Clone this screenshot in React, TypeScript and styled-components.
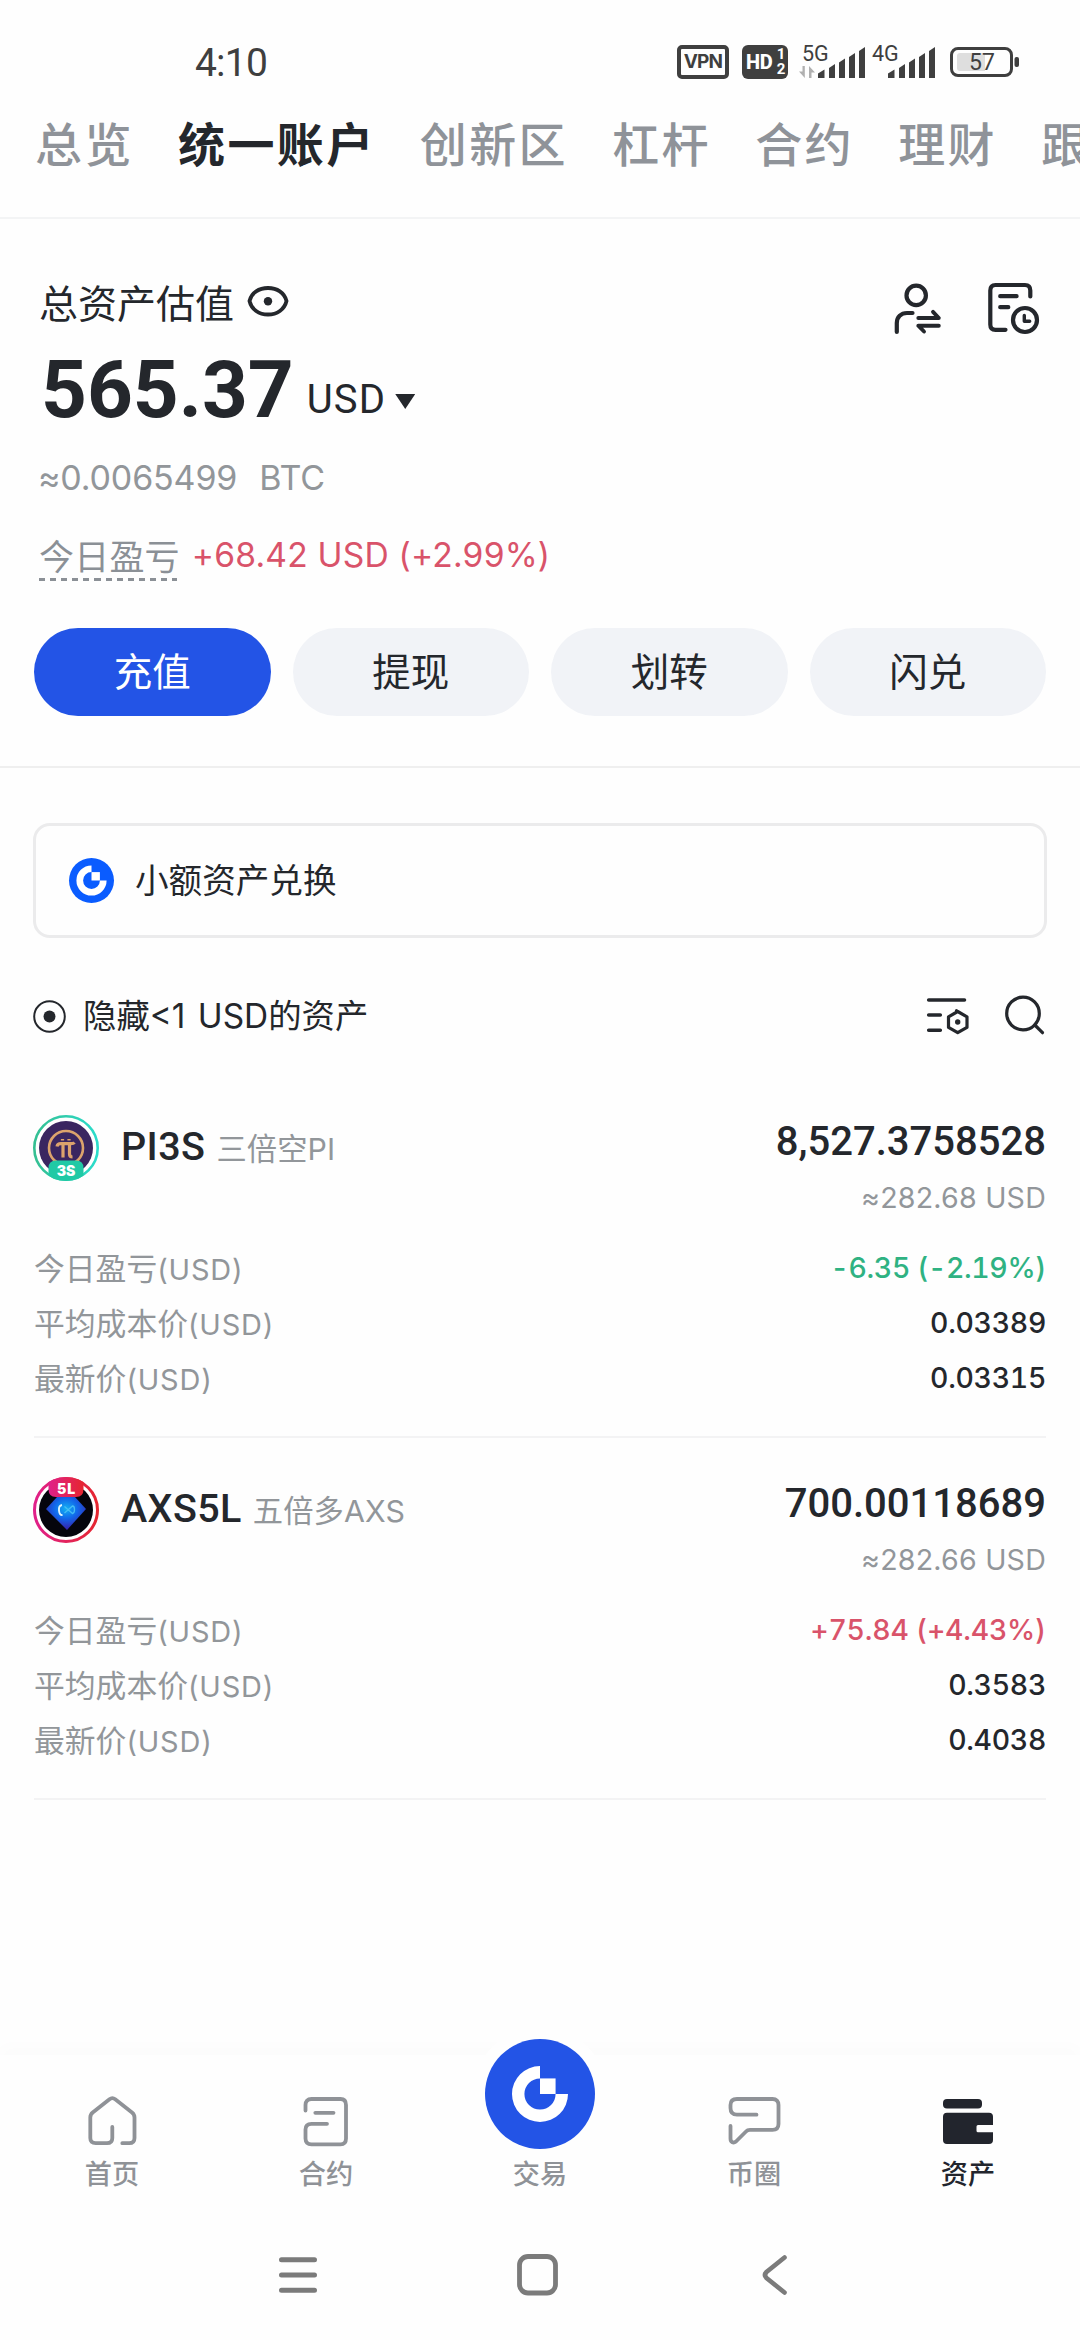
import React from "react";
import styled, { createGlobalStyle } from "styled-components";

const ink = "#24272c";
const muted = "#92969a";
const blue = "#2354e6";
const red = "#d9536a";
const green = "#2fb282";

const sans = `Inter, "Noto Sans CJK SC", sans-serif`;
const narrow = `Roboto, "Noto Sans CJK SC", sans-serif`;

const GlobalStyle = createGlobalStyle`
  *, *::before, *::after { box-sizing: border-box; }
  body { margin: 0; background: #fefefe; }
  svg { display: block; flex: none; overflow: visible; }
`;

const Page = styled.div`
  width: 1080px;
  height: 2340px;
  display: flex;
  flex-direction: column;
  overflow: hidden;
  background: #fefefe;
  color: ${ink};
  font-family: ${sans};
  white-space: nowrap;
`;

/* ---------- status bar ---------- */

const StatusBar = styled.header`
  height: 116px;
  padding: 8px 60px 0 195px;
  display: flex;
  align-items: center;
  justify-content: space-between;
  color: #3f3f3f;
`;

const Clock = styled.span`
  padding-top: 1px;
  font: 400 39px/50px ${narrow};
  letter-spacing: -0.8px;
`;

const StatusIcons = styled.div`
  display: flex;
  align-items: center;
`;

const VpnBadge = styled.span`
  width: 52px;
  height: 34px;
  margin-right: 13px;
  border: 4px solid #3f3f3f;
  border-radius: 5px;
  font: 700 19px/26px ${sans};
  letter-spacing: -0.8px;
  text-align: center;
`;

const HdBadge = styled.span`
  width: 46px;
  height: 34px;
  margin-right: 11px;
  padding: 0 3px 0 4px;
  display: flex;
  align-items: center;
  justify-content: space-between;
  border-radius: 6px;
  background: #3f3f3f;
  color: #fff;
  font: 800 20px/34px ${narrow};
  letter-spacing: -0.4px;
`;

const HdSims = styled.span`
  display: grid;
  font: 700 15px/15px ${narrow};
  justify-items: center;
`;

/* ---------- account tabs ---------- */

const Tabs = styled.nav`
  height: 103px;
  padding-left: 35px;
  display: flex;
  gap: 44.2px;
  border-bottom: 2px solid #f3f4f5;
`;

const Tab = styled.span<{ $active?: boolean }>`
  font: ${(p) => (p.$active ? 700 : 500)} 47px/57px ${sans};
  letter-spacing: 2.4px;
  color: ${(p) => (p.$active ? ink : "#8f9399")};
`;

/* ---------- balance summary ---------- */

const Summary = styled.section`
  height: 549px;
  padding: 59px 34px 0;
  display: flex;
  flex-direction: column;
  border-bottom: 2px solid #efefef;
`;

const TitleRow = styled.div`
  height: 60px;
  padding-left: 5px;
  display: flex;
  align-items: flex-start;
`;

const Title = styled.h1`
  margin: 0 13px 0 0;
  font: 400 39px/51px ${sans};
`;

const EyeSlot = styled.span`
  padding-top: 7px;
`;

const TitleActions = styled.div`
  margin-left: auto;
  padding-right: 6px;
  display: flex;
  gap: 46px;
`;

const BalanceRow = styled.div`
  height: 80px;
  margin-top: 12px;
  padding-left: 7px;
  display: flex;
  align-items: flex-start;
`;

const Balance = styled.span`
  font: 700 80px/80px ${narrow};
`;

const Currency = styled.span`
  margin: 25px 9px 0 13px;
  font: 400 40px/50px ${narrow};
  letter-spacing: 1.2px;
`;

const Caret = styled.span`
  width: 20px;
  height: 15px;
  margin-top: 44px;
  background: ${ink};
  clip-path: polygon(0 0, 100% 0, 50% 100%);
`;

const BtcValue = styled.div`
  margin-top: 26px;
  padding-left: 4px;
  font: 400 34px/44px ${sans};
  letter-spacing: -0.15px;
  word-spacing: 1.6px;
  color: ${muted};
  white-space: pre;
`;

const PnlRow = styled.div`
  height: 50px;
  margin-top: 30px;
  padding-left: 5px;
  display: flex;
  color: ${red};
  font: 400 33.6px/50px ${sans};
  letter-spacing: 0.2px;
`;

const PnlLabel = styled.span`
  height: 51px;
  margin-right: 12px;
  color: #8b9096;
  font: 400 35px/54px ${sans};
  background: repeating-linear-gradient(90deg, #8b9096 0 6px, transparent 6px 11.1px) 0 100% / 138px 3px no-repeat;
`;

const Actions = styled.div`
  margin-top: 48px;
  display: grid;
  grid-template-columns: repeat(4, 1fr);
  gap: 22px;
`;

const Action = styled.button<{ $primary?: boolean }>`
  height: 88px;
  padding: 0;
  border: 0;
  border-radius: 44px;
  background: ${(p) => (p.$primary ? blue : "#f1f3f7")};
  color: ${(p) => (p.$primary ? "#fff" : ink)};
  font: 400 38.5px/88px ${sans};
`;

/* ---------- conversion card and list filter ---------- */

const ConvertCard = styled.div`
  height: 115px;
  margin: 55px 33px 0;
  padding-left: 33px;
  display: flex;
  align-items: center;
  gap: 21px;
  border: 3px solid #ebebec;
  border-radius: 17px;
  font: 400 33.6px/48px ${sans};
`;

const FilterRow = styled.div`
  height: 40px;
  margin: 58px 34px 0 33px;
  display: flex;
  align-items: center;
  font: 400 33.4px/40px ${sans};
`;

const FilterLabel = styled.span`
  margin: 0 auto 0 17px;
  word-spacing: 3px;
`;

const Unit = styled.span`
  font-size: 0.94em;
  letter-spacing: 0.8px;
`;

const FilterIcons = styled.div`
  display: flex;
  gap: 35px;
`;

/* ---------- holdings ---------- */

const Holdings = styled.main`
  margin: 40px 34px 0;
`;

const Holding = styled.article`
  height: 362px;
  padding-top: 37px;
  border-bottom: 2px solid #f3f3f4;
`;

const HoldingHead = styled.div`
  height: 127px;
  display: flex;
  justify-content: space-between;
  align-items: flex-start;
`;

const Coin = styled.div`
  height: 68px;
  display: flex;
  align-items: center;

  svg {
    margin: 2px 22px 0 -1px;
  }
`;

const Names = styled.div`
  display: flex;
  align-items: baseline;
`;

const Symbol = styled.span`
  font: 500 39.5px/66px ${narrow};
  letter-spacing: 0.4px;
`;

const Alias = styled.span`
  margin-left: 11px;
  font: 400 30.3px/40px ${sans};
  letter-spacing: 0.1px;
  color: ${muted};
`;

const Amounts = styled.div`
  display: grid;
  justify-items: end;
`;

const Amount = styled.span`
  font: 500 40px/58px ${narrow};
`;

const Worth = styled.span`
  font: 400 28.6px/53px ${sans};
  letter-spacing: 0.2px;
  color: ${muted};
`;

const Detail = styled.div`
  height: 55px;
  display: flex;
  justify-content: space-between;
  line-height: 55px;
`;

const DetailLabel = styled.span`
  font-size: 30.8px;
  line-height: 57px;
  color: ${muted};
`;

const DetailValue = styled.span<{ $tone?: string; $track?: number }>`
  font-size: 28.4px;
  font-weight: 500;
  font-feature-settings: "tnum";
  letter-spacing: ${(p) => p.$track ?? -0.3}px;
  color: ${(p) => p.$tone ?? ink};
`;

/* ---------- bottom navigation ---------- */

const BottomNav = styled.nav`
  height: 155px;
  margin-top: auto;
  padding: 41px 5px 0;
  display: grid;
  grid-template-columns: repeat(5, 1fr);
  background: #fefefe;
  box-shadow: 0 -10px 14px rgba(0, 0, 0, 0.012);
`;

const NavItem = styled.div<{ $active?: boolean }>`
  display: flex;
  flex-direction: column;
  align-items: center;
  color: ${(p) => (p.$active ? "#22252d" : "#8f9297")};
`;

const NavGlyph = styled.div`
  height: 50px;
`;

const TradeButton = styled.div`
  width: 110px;
  height: 110px;
  margin: -57px 0 -3px;
  display: grid;
  place-items: center;
  border-radius: 50%;
  background: ${blue};
  box-shadow: 0 0 0 12px #fefefe;
`;

const NavLabel = styled.span`
  margin-top: 13px;
  font: 500 27.2px/32px ${sans};
`;

const SystemNav = styled.div`
  height: 130px;
  padding: 0 294px 0 278px;
  display: flex;
  align-items: center;
  justify-content: space-between;

  svg:nth-child(2) {
    margin-right: 6px;
  }
`;

/* ---------- drawings ---------- */

const Signal = () => (
  <svg width="136" height="34" viewBox="798 45 136 34" fill="#3f3f3f">
    <text x="801" y="61" fontFamily="Roboto, sans-serif" fontSize="21.500">5G</text>
    <text x="871" y="61" fontFamily="Roboto, sans-serif" fontSize="21.500">4G</text>
    <path d="M803.800 66V78L798 71.500H801.500V66ZM808 78V66L814 72.500H810.500V78Z" fill="#b0b0b0" />
    {[817, 887].map((x) => (
      <g key={x}>
        <path d={`M${x} 78V73.500L${x + 6.500} 69.500V78Z`} />
        <path d={`M${x + 11} 78V68L${x + 17} 64V78Z`} />
        <path d={`M${x + 21} 78V62.500L${x + 27} 58.500V78Z`} />
        <path d={`M${x + 31} 78V57L${x + 37} 53V78Z`} />
        <path d={`M${x + 41} 78V51L${x + 47} 47V78Z`} />
      </g>
    ))}
  </svg>
);

const BatterySlot = styled.span`
  margin-left: 15px;
`;

const Battery = () => (
  <svg width="70" height="34" viewBox="949 45 70 34">
    <rect x="950.500" y="48.500" width="60" height="27" rx="6.500" fill="none" stroke="#3f3f3f" strokeWidth="3" />
    <path d="M959 53H984V71H959Q956 71 956 68V56Q956 53 959 53Z" fill="#dedede" />
    <rect x="1013.500" y="57" width="4.500" height="10" rx="2" fill="#3f3f3f" />
    <text x="981" y="70.300" textAnchor="middle" fontFamily="Roboto, sans-serif" fontSize="23" fill="#3f3f3f">57</text>
  </svg>
);

const Eye = () => (
  <svg width="42" height="32" viewBox="0 0 42 32" fill="none" stroke={ink}>
    <path d="M2.500 16C4.500 7.500 12 3 21 3S37.500 7.500 39.500 16C37.500 24.500 30 29.500 21 29.500S4.500 24.500 2.500 16Z" strokeWidth="3.800" />
    <circle cx="21" cy="16.300" r="4.200" fill={ink} stroke="none" />
  </svg>
);

const AccountSwitch = () => (
  <svg width="48" height="52" viewBox="892 283 48 52" transform="translate(0 5)" fill="none" stroke={ink} strokeWidth="4.200" strokeLinecap="round" strokeLinejoin="round">
    <circle cx="914.200" cy="295.400" r="9.700" />
    <path d="M894.800 332V323C894.800 317 899 313 905 313H910.500" />
    <path d="M916.300 318H936.800L931 311.800M936.800 325.700H916.300L922 331.500" strokeWidth="3.900" />
  </svg>
);

const History = () => (
  <svg width="52" height="52" viewBox="988 283 52 52" transform="translate(0 5)" fill="none" stroke={ink} strokeWidth="4.200" strokeLinecap="round" strokeLinejoin="round">
    <path d="M1030.300 296.500V290.500Q1030.300 285 1025 285H995.500Q990.300 285 990.300 290.500V324.500Q990.300 329.800 995.500 329.800H1005.500" />
    <path d="M1000.200 296.200H1016.600M1000.200 307.200H1008.300" />
    <circle cx="1025" cy="320" r="12" />
    <path d="M1024.300 315.500V321.200H1029.700" strokeWidth="3.400" />
  </svg>
);

const GateMark = ({ size, disc }: { size: number; disc?: string }) => (
  <svg width={size} height={size} viewBox={disc ? "-41 -41 82 82" : "-27.5 -27.5 55 55"}>
    {disc && <circle r="41" fill={disc} />}
    <path d="M0 -27.500A27.500 27.500 0 1 0 27.500 0H15.300A15.300 15.300 0 1 1 0 -15.300Z" fill="#fff" />
    <rect x="0" y="-15.300" width="15.300" height="15.300" fill="#fff" />
  </svg>
);

const RadioOn = () => (
  <svg width="33" height="33" viewBox="0 0 33 33">
    <circle cx="16.500" cy="16.500" r="15.300" fill="none" stroke={ink} strokeWidth="2" />
    <circle cx="16.500" cy="16.500" r="6" fill={ink} />
  </svg>
);

const ListSettings = () => (
  <svg width="42" height="40" viewBox="927 996 42 40" fill="none" stroke={ink} strokeWidth="3.600" strokeLinecap="round" strokeLinejoin="round">
    <path d="M928.700 1000H964.500M928.700 1015H940.300M928.700 1030.300H940.300" />
    <path d="M957.700 1011.500L967 1016.800V1027.400L957.700 1032.600L948.500 1027.400V1016.800ZM956.500 1011.500V1010.500" strokeWidth="3.200" />
    <circle cx="957.700" cy="1022" r="2.700" fill={ink} stroke="none" />
  </svg>
);

const Search = () => (
  <svg width="42" height="40" viewBox="1004 996 42 40" fill="none" stroke={ink} strokeWidth="3.200" strokeLinecap="round">
    <circle cx="1023" cy="1013.500" r="16.300" />
    <path d="M1034.800 1025L1042.500 1032.700" />
  </svg>
);

const PiCoin = () => (
  <svg width="66" height="66" viewBox="0 0 66 66">
    <defs>
      <linearGradient id="piRing" x1="0" x2="1">
        <stop offset="0" stopColor="#35bf92" />
        <stop offset="1" stopColor="#2bdccb" />
      </linearGradient>
      <clipPath id="piClip"><circle cx="33" cy="33" r="33" /></clipPath>
    </defs>
    <circle cx="33" cy="33" r="31.700" fill="#fff" stroke="url(#piRing)" strokeWidth="2.600" />
    <circle cx="33" cy="33" r="27" fill="#3a2660" />
    <circle cx="33" cy="33" r="17" fill="none" stroke="#dca36c" strokeWidth="2.600" />
    <path d="M24 31.500Q24.500 28.700 28 28.700H38Q40.500 28.700 41.500 27.500M30 29V42.500M36.500 29V39Q36.500 42 39.500 42M29.500 24V25.500M36 24V25.500" fill="none" stroke="#dca36c" strokeWidth="3.200" />
    <path d="M15.500 66V53Q15.500 45.500 23 45.500H43Q50.500 45.500 50.500 53V66Z" fill="#20c9a5" clipPath="url(#piClip)" />
    <text x="33" y="60.500" textAnchor="middle" fontFamily="Inter, sans-serif" fontWeight="900" fontSize="14" fill="#fff">3S</text>
  </svg>
);

const AxsCoin = () => (
  <svg width="66" height="66" viewBox="0 0 66 66">
    <defs>
      <linearGradient id="axsRing" x1="0" x2="1">
        <stop offset="0" stopColor="#e0208a" />
        <stop offset="1" stopColor="#e5262f" />
      </linearGradient>
      <radialGradient id="axsGem" cx="0.500" cy="0.350" r="0.600">
        <stop offset="0" stopColor="#12b0f2" />
        <stop offset="0.500" stopColor="#1267ea" />
        <stop offset="1" stopColor="#3426b0" />
      </radialGradient>
      <clipPath id="axsClip"><circle cx="33" cy="33" r="33" /></clipPath>
    </defs>
    <circle cx="33" cy="33" r="31.500" fill="#fff" stroke="url(#axsRing)" strokeWidth="3" />
    <circle cx="33" cy="33" r="27" fill="#05050c" />
    <path d="M24 20H42L53 32L34 53L13 32Z" fill="url(#axsGem)" />
    <path d="M29 28Q25.500 28.500 26 33.500T29.500 38" fill="none" stroke="#dff6ff" strokeWidth="1.900" />
    <path d="M31.500 29.500L39.500 36.500Q41.500 36 41.500 32.500T39.500 29L31.500 36" fill="none" stroke="#45bdf5" strokeWidth="1.300" />
    <path d="M15.500 0V12Q15.500 20 23 20H43Q50.500 20 50.500 12V0Z" fill="url(#axsRing)" clipPath="url(#axsClip)" />
    <text x="33.500" y="17" textAnchor="middle" fontFamily="Inter, sans-serif" fontWeight="900" fontSize="14" fill="#fff" letterSpacing="1">5L</text>
  </svg>
);

const navStroke = {
  fill: "none",
  stroke: "currentColor",
  strokeWidth: 3.8,
  strokeLinecap: "round",
  strokeLinejoin: "round",
} as const;

const HomeIcon = () => (
  <svg width="49" height="50" viewBox="0 0 49 50" {...navStroke}>
    <path d="M24.300 31V42Q24.300 47.200 19 47.200H7.700Q2.300 47.200 2.300 42V21.500Q2.300 18.500 4.700 16.500L21.500 3.200Q24.300 1 27.200 3.200L44 16.500Q46.500 18.500 46.500 21.500V42Q46.500 47.200 41.200 47.200H34.300" />
  </svg>
);

const ContractIcon = () => (
  <svg width="46" height="50" viewBox="0 0 46 50" {...navStroke}>
    <path d="M2.500 14.500V9Q2.500 3 8.500 3H37.500Q43 3 43 9V42.500Q43 48.300 37.500 48.300H8.500Q2.500 48.300 2.500 42.500V33.500Q2.500 27.800 8.500 27.800H24" />
    <path d="M12.300 16.800H30.500" />
  </svg>
);

const CommunityIcon = () => (
  <svg width="54" height="50" viewBox="0 0 54 50" {...navStroke}>
    <path d="M3.500 30V42.500C3.500 46.500 6.500 47.500 9 45.500L19 35.500Q20.500 33.800 23 33.800H45.500Q51.500 33.800 51.500 28V9Q51.500 3 45.500 3H10Q3.500 3 3.500 9V12Q3.500 18.700 10 18.700H29.500" />
  </svg>
);

const WalletIcon = () => (
  <svg width="50" height="50" viewBox="0 0 50 50" fill="currentColor">
    <rect x="0" y="3" width="39" height="9.500" rx="4" />
    <path d="M4 16.700H46Q50 16.700 50 20.700V29H35Q33.500 29 33.500 30.500V34.800Q33.500 36.300 35 36.300H50V44Q50 48 46 48H4Q0 48 0 44V20.700Q0 16.700 4 16.700Z" />
  </svg>
);

/* ---------- data ---------- */

const tabs = ["总览", "统一账户", "创新区", "杠杆", "合约", "理财", "跟单"];

const holdings = [
  {
    icon: <PiCoin />,
    symbol: "PI3S",
    alias: "三倍空PI",
    amount: "8,527.3758528",
    worth: "≈282.68 USD",
    pnl: "-6.35 (-2.19%)",
    tone: green,
    track: -0.35,
    cost: "0.03389",
    last: "0.03315",
  },
  {
    icon: <AxsCoin />,
    symbol: "AXS5L",
    alias: "五倍多AXS",
    amount: "700.00118689",
    worth: "≈282.66 USD",
    pnl: "+75.84 (+4.43%)",
    tone: red,
    track: -0.2,
    cost: "0.3583",
    last: "0.4038",
  },
];

type DetailProps = { label: string; value: string; tone?: string; track?: number };

const DetailLine = ({ label, value, tone, track }: DetailProps) => (
  <Detail>
    <DetailLabel>{label}<Unit>(USD)</Unit></DetailLabel>
    <DetailValue $tone={tone} $track={track}>{value}</DetailValue>
  </Detail>
);

export default function App() {
  return (
    <>
      <GlobalStyle />
      <Page>
        <StatusBar>
          <Clock>4:10</Clock>
          <StatusIcons>
            <VpnBadge>VPN</VpnBadge>
            <HdBadge>HD<HdSims><span>1</span><span>2</span></HdSims></HdBadge>
            <Signal />
            <BatterySlot><Battery /></BatterySlot>
          </StatusIcons>
        </StatusBar>

        <Tabs>
          {tabs.map((t) => (
            <Tab key={t} $active={t === "统一账户"}>{t}</Tab>
          ))}
        </Tabs>

        <Summary>
          <TitleRow>
            <Title>总资产估值</Title>
            <EyeSlot><Eye /></EyeSlot>
            <TitleActions>
              <AccountSwitch />
              <History />
            </TitleActions>
          </TitleRow>
          <BalanceRow>
            <Balance>565.37</Balance>
            <Currency>USD</Currency>
            <Caret />
          </BalanceRow>
          <BtcValue>{"≈0.0065499  BTC"}</BtcValue>
          <PnlRow>
            <PnlLabel>今日盈亏</PnlLabel>
            +68.42 USD (+2.99%)
          </PnlRow>
          <Actions>
            <Action $primary>充值</Action>
            <Action>提现</Action>
            <Action>划转</Action>
            <Action>闪兑</Action>
          </Actions>
        </Summary>

        <ConvertCard>
          <GateMark size={45} disc="#0a5cff" />
          小额资产兑换
        </ConvertCard>

        <FilterRow>
          <RadioOn />
          <FilterLabel>隐藏&lt;1 USD的资产</FilterLabel>
          <FilterIcons>
            <ListSettings />
            <Search />
          </FilterIcons>
        </FilterRow>

        <Holdings>
          {holdings.map((h) => (
            <Holding key={h.symbol}>
              <HoldingHead>
                <Coin>
                  {h.icon}
                  <Names>
                    <Symbol>{h.symbol}</Symbol>
                    <Alias>{h.alias}</Alias>
                  </Names>
                </Coin>
                <Amounts>
                  <Amount>{h.amount}</Amount>
                  <Worth>{h.worth}</Worth>
                </Amounts>
              </HoldingHead>
              <DetailLine label="今日盈亏" value={h.pnl} tone={h.tone} track={h.track} />
              <DetailLine label="平均成本价" value={h.cost} />
              <DetailLine label="最新价" value={h.last} />
            </Holding>
          ))}
        </Holdings>

        <BottomNav>
          <NavItem>
            <NavGlyph><HomeIcon /></NavGlyph>
            <NavLabel>首页</NavLabel>
          </NavItem>
          <NavItem>
            <NavGlyph><ContractIcon /></NavGlyph>
            <NavLabel>合约</NavLabel>
          </NavItem>
          <NavItem>
            <TradeButton><GateMark size={56} /></TradeButton>
            <NavLabel>交易</NavLabel>
          </NavItem>
          <NavItem>
            <NavGlyph><CommunityIcon /></NavGlyph>
            <NavLabel>币圈</NavLabel>
          </NavItem>
          <NavItem $active>
            <NavGlyph><WalletIcon /></NavGlyph>
            <NavLabel>资产</NavLabel>
          </NavItem>
        </BottomNav>

        <SystemNav>
          <svg width="40" height="42" viewBox="0 0 40 42" stroke="#7b7b7b" strokeWidth="5" strokeLinecap="round">
            <path d="M3.500 5.700H36.500M3.500 21H36.500M3.500 36.300H36.500" />
          </svg>
          <svg width="41" height="42" viewBox="0 0 41 42" fill="none" stroke="#7b7b7b" strokeWidth="4.800">
            <rect x="2.500" y="2.500" width="36" height="36.500" rx="8.500" />
          </svg>
          <svg width="24" height="42" viewBox="0 0 24 42" fill="none" stroke="#7b7b7b" strokeWidth="4.600" strokeLinecap="round">
            <path d="M22.500 3.500L4.500 18Q1.500 21 4.500 24L22.500 38.500" />
          </svg>
        </SystemNav>
      </Page>
    </>
  );
}
